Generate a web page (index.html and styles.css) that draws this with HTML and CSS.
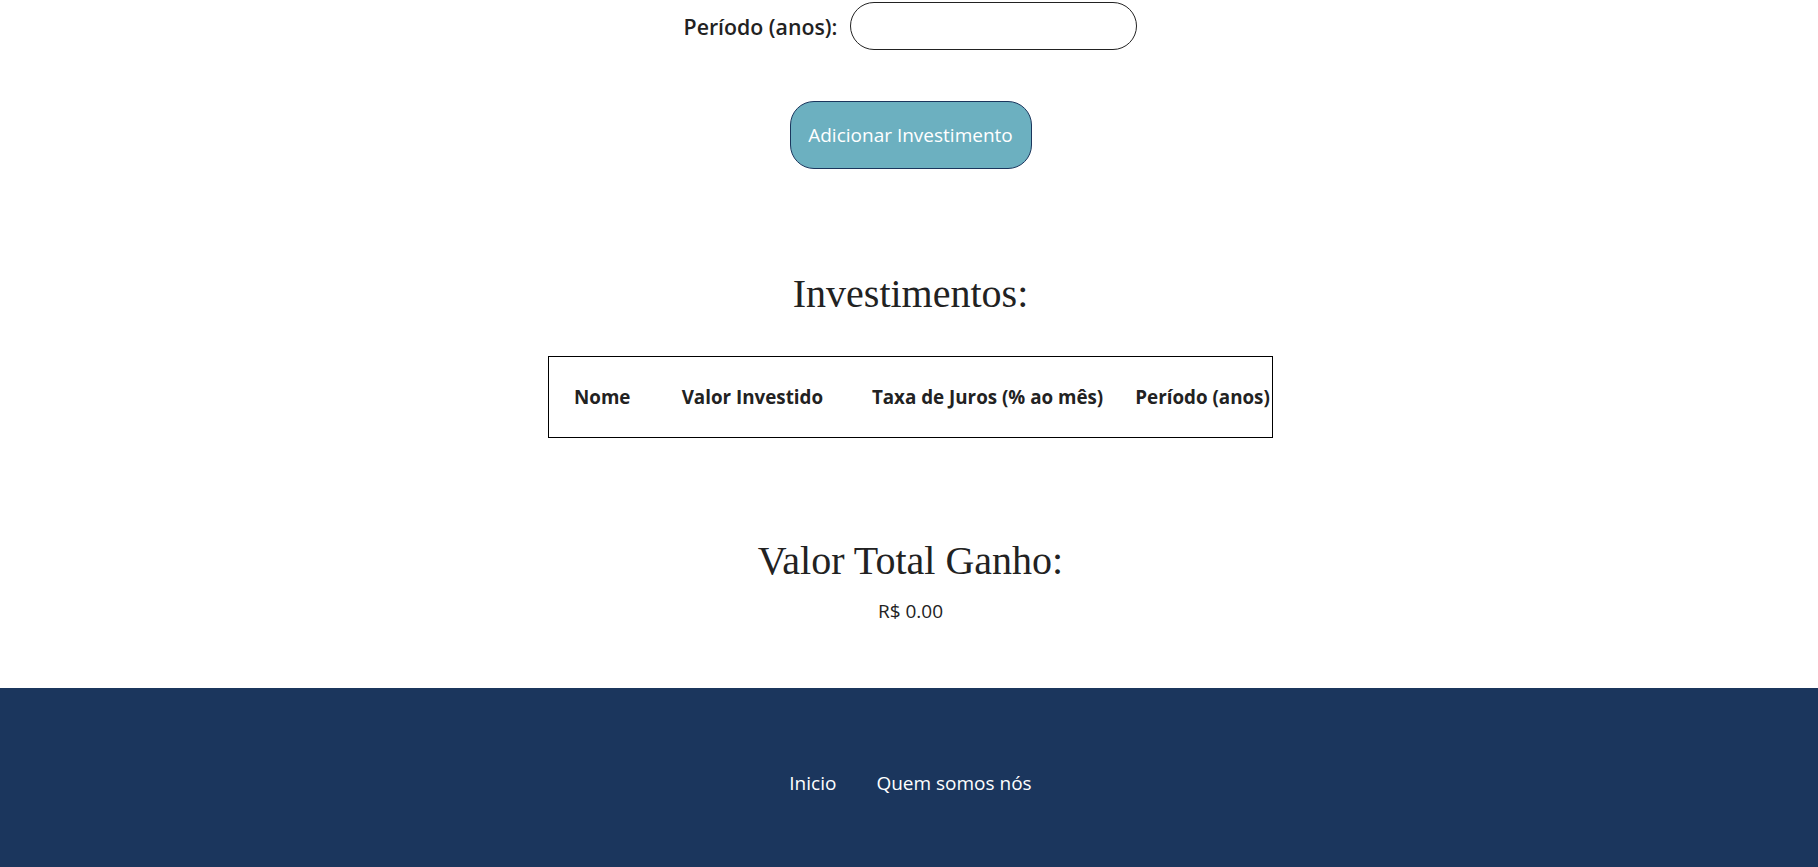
FILE: index.html
```html
<!DOCTYPE html>
<html lang="pt-BR">
<head>
<meta charset="utf-8">
<title>Investimentos</title>
<link rel="stylesheet" href="styles.css">
</head>
<body>
<main class="page">
  <div class="field-row">
    <label class="field-label" for="periodo">Período (anos):</label>
    <input class="field-input" id="periodo" type="text">
  </div>
  <button class="add-btn" type="button">Adicionar Investimento</button>

  <h2 class="section-title">Investimentos:</h2>
  <table class="inv-table">
    <colgroup>
      <col class="c1"><col class="c2"><col class="c3"><col class="c4">
    </colgroup>
    <thead>
      <tr>
        <th>Nome</th>
        <th>Valor Investido</th>
        <th>Taxa de Juros (% ao mês)</th>
        <th class="last">Período (anos)</th>
      </tr>
    </thead>
  </table>

  <h2 class="section-title total-title">Valor Total Ganho:</h2>
  <p class="total-value">R$ 0.00</p>
</main>
<footer class="site-footer">
  <nav class="footer-nav">
    <a href="#" class="footer-link">Inicio</a>
    <a href="#" class="footer-link">Quem somos nós</a>
  </nav>
</footer>
</body>
</html>
```
FILE: styles.css
```css
html, body {
  margin: 0;
  padding: 0;
  background: #ffffff;
}

body {
  font-family: "Open Sans", "Noto Sans", sans-serif;
  font-size: 19px;
  color: #222222;
  min-height: 867px;
  display: flex;
  flex-direction: column;
}

.page {
  display: flex;
  flex-direction: column;
  align-items: center;
  padding-left: 3px;
}

.field-row {
  margin-top: 2px;
  display: flex;
  align-items: center;
  gap: 13px;
  height: 48px;
}

.field-label {
  font-weight: 600;
  font-size: 21.3px;
  color: #222222;
}

.field-input {
  box-sizing: border-box;
  width: 287px;
  height: 48px;
  border: 1px solid #222222;
  border-radius: 24px;
  background: #ffffff;
  outline: none;
  padding: 0 16px;
  font: inherit;
}

.add-btn {
  box-sizing: border-box;
  margin-top: 51px;
  width: 242px;
  height: 68px;
  background: #6cb0c0;
  border: 1px solid #1b365d;
  border-radius: 24px;
  color: #ffffff;
  font-family: "Open Sans", "Noto Sans", sans-serif;
  font-size: 19px;
  padding: 0;
  cursor: pointer;
}

.section-title {
  margin: 103px 0 0;
  font-family: "Liberation Serif", "Times New Roman", serif;
  font-weight: 400;
  font-size: 40px;
  line-height: 44px;
  color: #222222;
}

.inv-table {
  margin-top: 40px;
  border: 1px solid #000000;
  border-collapse: collapse;
  table-layout: fixed;
  width: 725px;
  height: 82px;
}

.inv-table .c1 { width: 108px; }
.inv-table .c2 { width: 190px; }
.inv-table .c3 { width: 263px; }
.inv-table .c4 { width: 162px; }

.inv-table th {
  text-align: left;
  padding: 0 0 0 25px;
  font-weight: 700;
  font-size: 18.8px;
  white-space: nowrap;
  overflow: visible;
  color: #222222;
}

.total-title {
  margin-top: 101px;
}

.total-value {
  margin: 15px 0 0;
  font-size: 19px;
  line-height: 26px;
}

.site-footer {
  margin-top: auto;
  background: #1b365d;
  height: 179px;
  box-sizing: border-box;
  padding-top: 82px;
  padding-left: 3px;
}

.footer-nav {
  display: flex;
  justify-content: center;
  gap: 40px;
  line-height: 26px;
}

.footer-link {
  color: #ffffff;
  text-decoration: none;
  font-size: 19px;
}
```
